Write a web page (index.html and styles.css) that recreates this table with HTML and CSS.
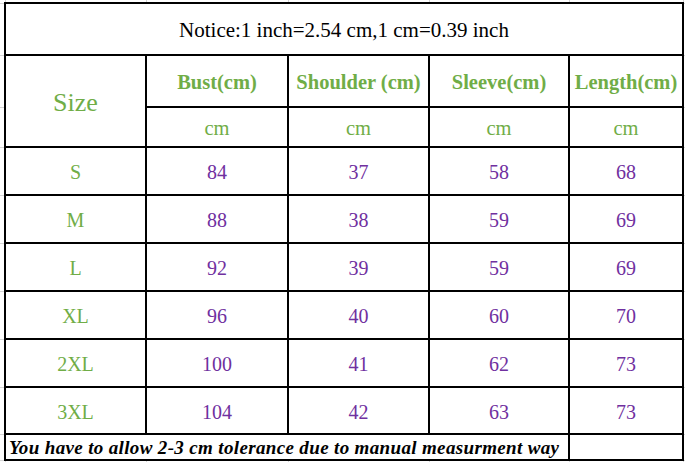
FILE: index.html
```html
<!DOCTYPE html>
<html>
<head>
    <link rel="stylesheet" href="styles.css">
</head>
<body>
    <table class="sheet">
        <colgroup>
            <col class="col-edge-l">
            <col class="col-size">
            <col class="col-bust">
            <col class="col-shoulder">
            <col class="col-sleeve">
            <col class="col-length">
            <col class="col-edge-r">
        </colgroup>
        <tr class="row-gap-top">
            <td class="pad"></td><td class="pad"></td><td class="pad"></td><td class="pad"></td><td class="pad"></td><td class="pad"></td><td class="pad"></td>
        </tr>
        <tr class="row-notice">
            <td class="pad"></td>
            <td class="cell notice" colspan="5">Notice:1 inch=2.54 cm,1 cm=0.39 inch</td>
            <td class="pad"></td>
        </tr>
        <tr class="row-head">
            <td class="pad"></td>
            <td class="cell size-title" rowspan="2">Size</td>
            <td class="cell head">Bust(cm)</td>
            <td class="cell head">Shoulder (cm)</td>
            <td class="cell head">Sleeve(cm)</td>
            <td class="cell head">Length(cm)</td>
            <td class="pad"></td>
        </tr>
        <tr class="row-unit">
            <td class="pad"></td>
            <td class="cell unit">cm</td>
            <td class="cell unit">cm</td>
            <td class="cell unit">cm</td>
            <td class="cell unit">cm</td>
            <td class="pad"></td>
        </tr>
        <tr class="row-data">
            <td class="pad"></td>
            <td class="cell size">S</td><td class="cell num">84</td><td class="cell num">37</td><td class="cell num">58</td><td class="cell num">68</td>
            <td class="pad"></td>
        </tr>
        <tr class="row-data">
            <td class="pad"></td>
            <td class="cell size">M</td><td class="cell num">88</td><td class="cell num">38</td><td class="cell num">59</td><td class="cell num">69</td>
            <td class="pad"></td>
        </tr>
        <tr class="row-data">
            <td class="pad"></td>
            <td class="cell size">L</td><td class="cell num">92</td><td class="cell num">39</td><td class="cell num">59</td><td class="cell num">69</td>
            <td class="pad"></td>
        </tr>
        <tr class="row-data">
            <td class="pad"></td>
            <td class="cell size">XL</td><td class="cell num">96</td><td class="cell num">40</td><td class="cell num">60</td><td class="cell num">70</td>
            <td class="pad"></td>
        </tr>
        <tr class="row-data">
            <td class="pad"></td>
            <td class="cell size">2XL</td><td class="cell num">100</td><td class="cell num">41</td><td class="cell num">62</td><td class="cell num">73</td>
            <td class="pad"></td>
        </tr>
        <tr class="row-data row-last">
            <td class="pad"></td>
            <td class="cell size">3XL</td><td class="cell num">104</td><td class="cell num">42</td><td class="cell num">63</td><td class="cell num">73</td>
            <td class="pad"></td>
        </tr>
        <tr class="row-note">
            <td class="pad"></td>
            <td class="cell note" colspan="4">You have to allow 2-3 cm tolerance due to manual measurment way</td>
            <td class="cell"></td>
            <td class="pad"></td>
        </tr>
        <tr class="row-gap-bottom">
            <td class="pad"></td><td class="pad"></td><td class="pad"></td><td class="pad"></td><td class="pad"></td><td class="pad"></td><td class="pad"></td>
        </tr>
    </table>
</body>
</html>
```

FILE: styles.css
```css
* {
    box-sizing: border-box;
    margin: 0;
    padding: 0;
}

body {
    background: #fff;
    font-family: "Liberation Serif", "Times New Roman", serif;
    overflow: hidden;
}

.sheet {
    width: 685px;
    border-collapse: collapse;
    table-layout: fixed;
}

.col-edge-l { width: 5px; }
.col-size { width: 141px; }
.col-bust { width: 142px; }
.col-shoulder { width: 141px; }
.col-sleeve { width: 140px; }
.col-length { width: 114px; }
.col-edge-r { width: 2px; }

.sheet td {
    padding: 0;
    border: 1px solid #d4d4d4;
    text-align: center;
    vertical-align: middle;
    white-space: nowrap;
}

/* spreadsheet gridlines stop at the window edge */
.row-gap-top td { border-top: none; }
.row-gap-bottom td { border-bottom: none; }
.sheet td.pad:first-child { border-left: none; }
.sheet td.pad:last-child { border-right: none; }

.sheet td.cell {
    padding-top: 3px;
    border: 2px solid #000;
}

.row-gap-top { height: 3px; }
.row-notice { height: 52px; }
.row-head { height: 52px; }
.row-unit { height: 40px; }
.row-data { height: 48px; }
.row-last { height: 47px; }
.row-note { height: 26px; }
.row-gap-bottom { height: 2px; }

.notice {
    font-size: 21px;
    color: #000;
}

.size-title {
    font-size: 26px;
    color: #70ad47;
}

.head {
    font-size: 20.5px;
    font-weight: bold;
    color: #70ad47;
}

.unit {
    font-size: 20.5px;
    color: #70ad47;
}

.size {
    font-size: 20px;
    color: #70ad47;
}

.num {
    font-size: 20px;
    color: #7030a0;
}

.sheet td.note {
    padding: 1px 0 0 3px;
    text-align: left;
    font-size: 19px;
    font-weight: bold;
    font-style: italic;
    letter-spacing: 0.35px;
    color: #000;
}
```
